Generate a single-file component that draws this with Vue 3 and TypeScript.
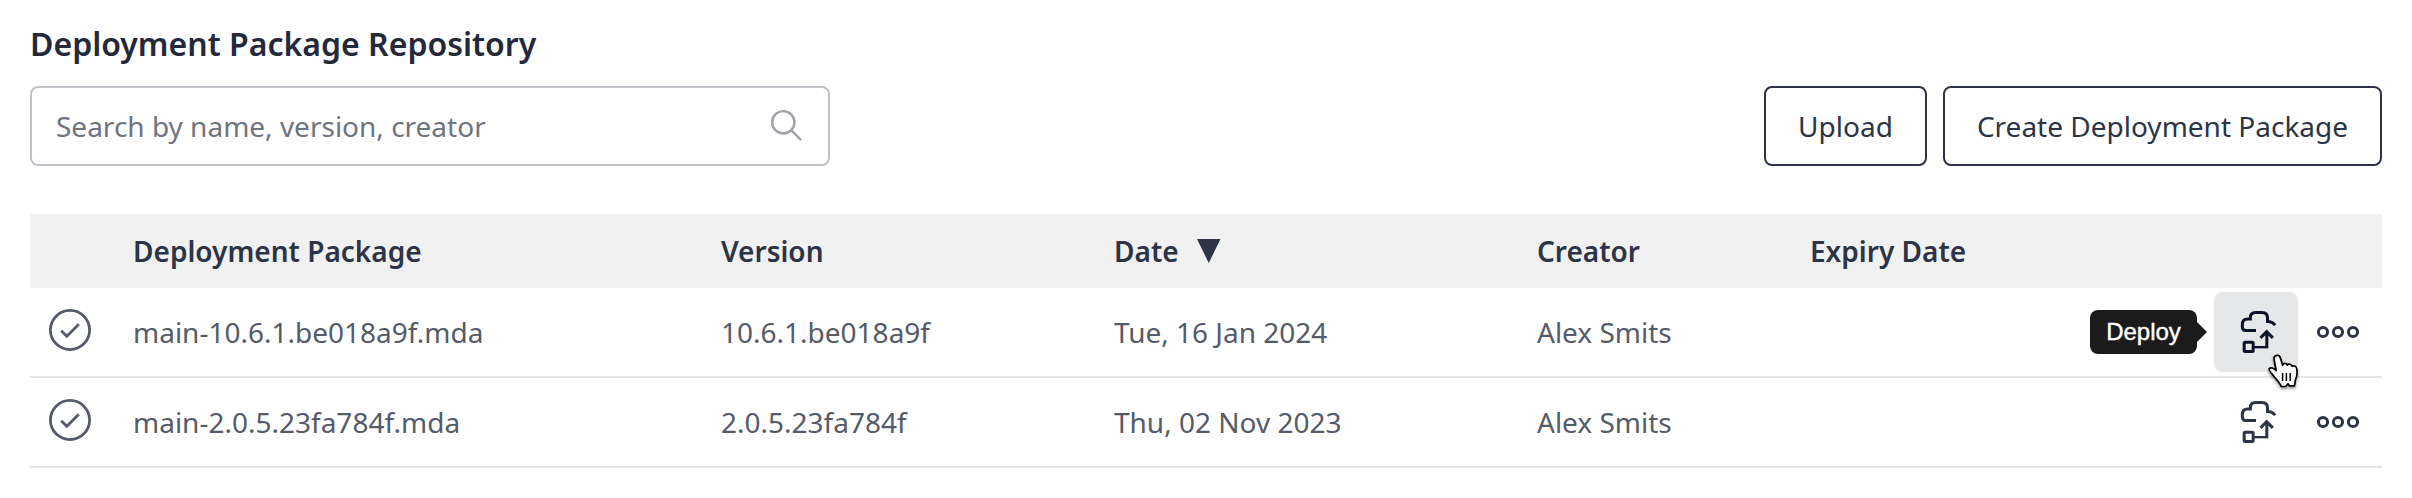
<script setup lang="ts">
interface DeploymentPackage {
  name: string
  version: string
  date: string
  creator: string
  expiry: string
  active: boolean
}

const packages: DeploymentPackage[] = [
  {
    name: 'main-10.6.1.be018a9f.mda',
    version: '10.6.1.be018a9f',
    date: 'Tue, 16 Jan 2024',
    creator: 'Alex Smits',
    expiry: '',
    active: true,
  },
  {
    name: 'main-2.0.5.23fa784f.mda',
    version: '2.0.5.23fa784f',
    date: 'Thu, 02 Nov 2023',
    creator: 'Alex Smits',
    expiry: '',
    active: false,
  },
]
</script>

<template>
  <main class="repository">
    <h1 class="title">Deployment Package Repository</h1>

    <div class="toolbar">
      <div class="search">
        <input class="search-input" type="text" placeholder="Search by name, version, creator" />
        <svg class="search-icon" viewBox="0 0 36 36" aria-hidden="true">
          <circle cx="15.3" cy="15.3" r="11.2" />
          <path d="M23.4 23.4 32.4 32.4" />
        </svg>
      </div>
      <div class="actions">
        <button class="btn upload" type="button">Upload</button>
        <button class="btn create" type="button">Create Deployment Package</button>
      </div>
    </div>

    <section class="table">
      <div class="row head">
        <span></span>
        <span>Deployment Package</span>
        <span>Version</span>
        <span class="sorted">
          Date
          <svg class="sort-icon" viewBox="0 0 24 24" aria-hidden="true"><path d="M0 0H23.5L11.75 24Z" /></svg>
        </span>
        <span>Creator</span>
        <span>Expiry Date</span>
        <span></span>
      </div>

      <div v-for="item in packages" :key="item.name" class="row body">
        <svg class="check" viewBox="0 0 42 42" aria-hidden="true">
          <circle cx="21" cy="21" r="19.6" />
          <path d="M12.2 21.8 17.8 27.3 29.8 15.2" />
        </svg>
        <span>{{ item.name }}</span>
        <span>{{ item.version }}</span>
        <span>{{ item.date }}</span>
        <span>{{ item.creator }}</span>
        <span>{{ item.expiry }}</span>
        <div class="row-actions">
          <button class="deploy" :class="{ active: item.active }" type="button" aria-label="Deploy">
            <svg class="deploy-icon" viewBox="72 54 132 144" aria-hidden="true">
              <path d="M138 121.500H108Q97 121.500 97 110V104Q97 87 113 87H121V83Q121 67.500 137 67.500H156Q172.500 67.500 172.500 84V94.500Q188 94.500 195 106" />
              <rect x="102.500" y="156.500" width="27" height="28" rx="3" />
              <path class="thin" d="M131 171.500H170" />
              <path d="M170.500 175V126M151.500 143.500 170 125 188.500 143.500" />
            </svg>
            <span v-if="item.active" class="tooltip">Deploy</span>
            <svg v-if="item.active" class="pointer" viewBox="0 0 36 40" aria-hidden="true">
              <path d="M9.500 2.500C11.500 2 13 3.300 13.500 5.200L15.600 12.200C16 9.900 19.600 9.800 20.400 12.100C21.500 10.500 24.500 11.100 25.100 13.300C26.500 12.200 29 13 29.600 15.200C31 20.500 30 23.500 28.300 27.500L27.500 32.800H22.300L21 30.800L18.500 33.500H14.300C12.600 29.500 9 26 6.700 22.900C5 20.600 1 17.700 2.300 15.700C3.600 13.800 6.500 15.300 9.200 17.500L7 6C6.700 4.100 7.800 2.900 9.500 2.500Z" />
              <path class="creases" d="M15.600 20V28M19.400 20V28M23.200 20V28" />
            </svg>
          </button>
          <svg class="more" viewBox="0 0 44 14" aria-label="More">
            <circle cx="7" cy="7" r="4.600" />
            <circle cx="22" cy="7" r="4.600" />
            <circle cx="37" cy="7" r="4.600" />
          </svg>
        </div>
      </div>
    </section>
  </main>
</template>

<style>
body {
  margin: 0;
  background: #fff;
}
</style>

<style scoped>
.repository {
  box-sizing: border-box;
  height: 498px;
  padding: 22px 30px 0;
  overflow: hidden;
  background: #fff;
  font-family: 'Noto Sans', sans-serif;
  font-size: 28px;
  color: #555b68;
}

.title {
  margin: 0;
  height: 64px;
  line-height: 44px;
  font-size: 32px;
  font-weight: 600;
  color: #23293a;
}

.toolbar {
  display: flex;
  justify-content: space-between;
  height: 80px;
  margin-bottom: 48px;
}

.search {
  box-sizing: border-box;
  display: flex;
  align-items: center;
  width: 800px;
  border: 2px solid #c1c2c7;
  border-radius: 8px;
  padding: 0 24px;
}

.search-input {
  flex: 1;
  height: 72px;
  padding: 0;
  border: 0;
  outline: 0;
  background: transparent;
  font: inherit;
}

.search-input::placeholder {
  color: #6f747f;
  opacity: 1;
}

.search-icon {
  width: 36px;
  height: 36px;
  margin-bottom: 2px;
  fill: none;
  stroke: #9fa2aa;
  stroke-width: 2.4;
  stroke-linecap: round;
}

.actions {
  display: flex;
  gap: 16px;
}

.btn {
  box-sizing: border-box;
  height: 80px;
  padding: 0;
  border: 2px solid #2c3446;
  border-radius: 8px;
  background: #fff;
  font: inherit;
  color: #2c3446;
}

.upload {
  width: 163px;
}

.create {
  width: 439px;
}

.row {
  box-sizing: border-box;
  display: grid;
  grid-template-columns: 103px 588px 393px 423px 273px 374px 198px;
  align-items: center;
  line-height: 38px;
}

.head {
  height: 74px;
  background: #f1f1f1;
  font-weight: 600;
  color: #2c3446;
}

.sorted {
  display: flex;
  align-items: center;
  gap: 18px;
}

.sort-icon {
  width: 24px;
  height: 24px;
  fill: #2c3446;
}

.body {
  height: 90px;
  border-bottom: 2px solid #e5e5e6;
}

.check {
  width: 42px;
  height: 42px;
  margin: 0 0 4px 19px;
  fill: none;
  stroke: #555b68;
  stroke-width: 2.8;
}

.row-actions {
  display: flex;
  align-items: center;
  gap: 18px;
  padding-left: 30px;
}

.deploy {
  position: relative;
  display: grid;
  place-items: center;
  width: 84px;
  height: 80px;
  padding: 0;
  border: 0;
  border-radius: 8px;
  background: transparent;
  color: #2c3446;
}

.deploy.active {
  background: #e6e7e9;
  color: #0a1327;
}

.deploy-icon {
  width: 44px;
  height: 48px;
  fill: none;
  stroke: currentColor;
  stroke-width: 9;
}

.deploy-icon .thin {
  stroke-width: 7;
}

.tooltip {
  position: absolute;
  right: 101px;
  top: 18px;
  width: 107px;
  height: 44px;
  border-radius: 8px;
  background: #1b1b1b;
  color: #fff;
  font: 24px/43px 'Liberation Sans', Arial, sans-serif;
  -webkit-text-stroke: 0.4px #fff;
  text-align: center;
}

.tooltip::after {
  content: '';
  position: absolute;
  left: 100%;
  top: 12px;
  border: 10px solid transparent;
  border-left-color: #1b1b1b;
  border-right: 0;
}

.pointer {
  position: absolute;
  left: 53px;
  top: 61px;
  width: 36px;
  height: 40px;
  z-index: 1;
  fill: #fff;
  stroke: #000;
  stroke-width: 1.7;
  stroke-linejoin: round;
  filter: drop-shadow(0 2px 1.500px rgba(0, 0, 0, 0.4));
}

.pointer .creases {
  stroke-width: 1.500;
}

.more {
  width: 44px;
  height: 14px;
  fill: none;
  stroke: #2c3446;
  stroke-width: 3;
}
</style>
